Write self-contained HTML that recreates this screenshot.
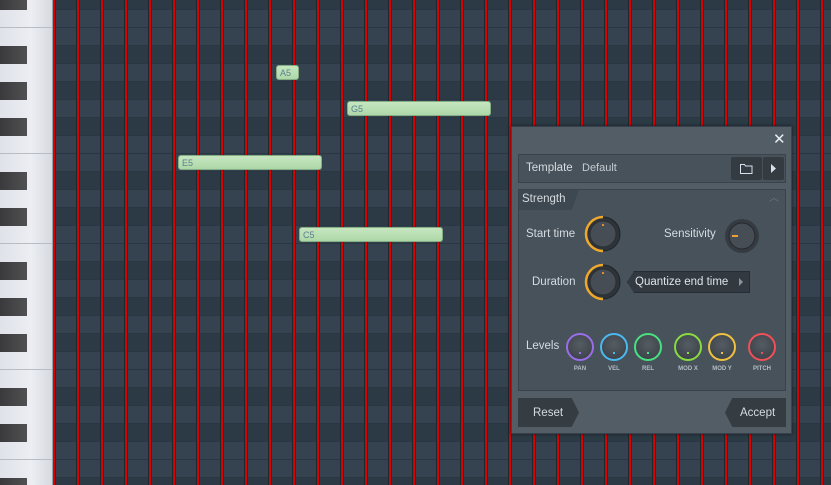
<!DOCTYPE html>
<html><head><style>
*{margin:0;padding:0;box-sizing:border-box}
html,body{width:831px;height:485px;overflow:hidden}
body{background:#2f3d48;font-family:"Liberation Sans",sans-serif;position:relative}
#piano{position:absolute;left:0;top:0;width:53px;height:485px;overflow:hidden;background:linear-gradient(90deg,#dfe2e8,#eceef3 60%,#d6d9e0);border-right:1px solid #9aa0a8}
.bk{position:absolute;left:0;width:27px;height:18px;background:linear-gradient(90deg,#3a3a3c,#505052)}
.wl{position:absolute;left:0;width:52px;height:1px;background:#b8bcc4}
#grid{position:absolute;left:53px;top:0;width:778px;height:485px;
background-image:
repeating-linear-gradient(90deg,#1e2830 0 1px,#d80000 1px 3px,#1e2830 3px 4px,transparent 4px 24px),
repeating-linear-gradient(180deg,transparent 0 17px,#2a3742 17px 18px),
linear-gradient(180deg,#34434f 0 36px,#2c3a45 36px 54px,#34434f 54px 72px,#2c3a45 72px 90px,#34434f 90px 108px,#2c3a45 108px 126px,#34434f 126px 162px,#2c3a45 162px 180px,#34434f 180px 198px,#2c3a45 198px 216px);
background-size:24px 100%,100% 18px,100% 216px;
background-position:-1px 0,0 10px,0 10px;background-repeat:repeat-x,repeat,repeat}
.note{position:absolute;height:15px;background:linear-gradient(#c6e6c0,#add8a8);border:1px solid #84ad84;border-radius:3px;font-size:9px;color:#5c8090;padding:2px 0 0 3px;line-height:10px}
#dlg{position:absolute;left:511px;top:126px;width:281px;height:308px;background:#525d66;border:1px solid #3a434b;box-shadow:0 0 3px #0008}
.t{position:absolute;color:#d6dce0;font-size:11.5px;line-height:14px}
.lk{position:absolute;width:28px;height:28px;border-radius:50%;background:radial-gradient(circle at 50% 40%,#555d64,#363c42);border:2px solid}
.lk i{position:absolute;left:11px;top:17px;width:2px;height:2px}
.lab{position:absolute;font-size:6px;font-weight:bold;color:#b5bcc2;width:40px;text-align:center}
</style></head><body>
<div id="piano">
<div class="bk" style="top:-8px"></div><div class="bk" style="top:46px"></div><div class="bk" style="top:82px"></div><div class="bk" style="top:118px"></div><div class="bk" style="top:172px"></div><div class="bk" style="top:208px"></div><div class="bk" style="top:262px"></div><div class="bk" style="top:298px"></div><div class="bk" style="top:334px"></div><div class="bk" style="top:388px"></div><div class="bk" style="top:424px"></div><div class="bk" style="top:478px;height:7px"></div>
<div class="wl" style="top:27px"></div><div class="wl" style="top:153px"></div><div class="wl" style="top:243px"></div><div class="wl" style="top:369px"></div><div class="wl" style="top:459px"></div>
</div>
<div id="grid"></div>
<div class="note" style="left:276px;top:65px;width:23px">A5</div>
<div class="note" style="left:347px;top:101px;width:144px">G5</div>
<div class="note" style="left:178px;top:155px;width:144px">E5</div>
<div class="note" style="left:299px;top:227px;width:144px">C5</div>

<div id="dlg">
<div class="t" style="left:261px;top:6px;font-size:15px;color:#e8eef2">✕</div>
<div style="position:absolute;left:6px;top:27px;width:268px;height:29px;background:#47525b;border:1px solid #3a434b"></div>
<div class="t" style="left:14px;top:34px">Template</div>
<div class="t" style="left:70px;top:34px;color:#c6ccd0;font-size:11px">Default</div>
<div style="position:absolute;left:219px;top:30px;width:31px;height:23px;background:#343b41;border-radius:2px"></div>
<svg style="position:absolute;left:228px;top:36px" width="13" height="11"><path d="M0.5 1.5h4l1 1.5h6.5v7.5h-11.5z" fill="none" stroke="#dde" stroke-width="1"/></svg>
<div style="position:absolute;left:251px;top:30px;width:21px;height:23px;background:#343b41;border-radius:2px"></div>
<svg style="position:absolute;left:259px;top:37px" width="6" height="9"><path d="M0 0L5 4.5L0 9z" fill="#dde"/></svg>
<div style="position:absolute;left:6px;top:62px;width:268px;height:202px;background:#47525b;border:1px solid #3a434b"></div>
<div style="position:absolute;left:7px;top:63px;width:60px;height:20px;background:#3e4850;clip-path:polygon(0 0,100% 0,88% 100%,0 100%)"></div>
<div class="t" style="left:10px;top:65px">Strength</div>
<div class="t" style="left:257px;top:65px;color:#6b757d;font-size:10px">︿</div>
<div class="t" style="left:14px;top:100px">Start time</div>
<div class="t" style="left:152px;top:100px">Sensitivity</div>
<div class="t" style="left:20px;top:148px">Duration</div>
<svg style="position:absolute;left:71px;top:87px" width="40" height="40"><circle cx="20" cy="20" r="17" fill="#2e3439" stroke="#1f2428"/><path d="M20 3A17 17 0 0 0 20 37" fill="none" stroke="#f0a82a" stroke-width="2.5"/><circle cx="20" cy="20" r="13" fill="#464d54" stroke="#2a2f34"/><rect x="19" y="10" width="2" height="2" fill="#e09030"/></svg>
<svg style="position:absolute;left:71px;top:135px" width="40" height="40"><circle cx="20" cy="20" r="17" fill="#2e3439" stroke="#1f2428"/><path d="M20 3A17 17 0 0 0 20 37" fill="none" stroke="#f0a82a" stroke-width="2.5"/><circle cx="20" cy="20" r="13" fill="#464d54" stroke="#2a2f34"/><rect x="19" y="10" width="2" height="2" fill="#e09030"/></svg>
<svg style="position:absolute;left:210px;top:89px" width="40" height="40"><circle cx="20" cy="20" r="17" fill="#353b41"/><circle cx="20" cy="20" r="13" fill="#464d54" stroke="#23282c"/><rect x="10" y="19" width="6" height="2" fill="#f0a030"/></svg>
<div style="position:absolute;left:115px;top:144px;width:123px;height:22px;background:#323940;border:1px solid #262c31;clip-path:polygon(7px 0,100% 0,100% 100%,7px 100%,0 50%)"></div>
<div class="t" style="left:123px;top:148px;color:#dfe4e8">Quantize end time</div>
<svg style="position:absolute;left:227px;top:151px" width="5" height="8"><path d="M0 0L4 4L0 8z" fill="#8a949c"/></svg>
<div class="t" style="left:14px;top:212px">Levels</div>
<div class="lk" style="left:54px;top:206px;border-color:#9a6ee8"><i style="background:#9a6ee8"></i></div>
<div class="lk" style="left:88px;top:206px;border-color:#4cb8f0"><i style="background:#4cb8f0"></i></div>
<div class="lk" style="left:122px;top:206px;border-color:#48e080"><i style="background:#48e080"></i></div>
<div class="lk" style="left:162px;top:206px;border-color:#88dc40"><i style="background:#88dc40"></i></div>
<div class="lk" style="left:196px;top:206px;border-color:#f0c040"><i style="background:#f0c040"></i></div>
<div class="lk" style="left:236px;top:206px;border-color:#f05058"><i style="background:#f05058"></i></div>
<div class="lab" style="left:48px;top:239px">PAN</div>
<div class="lab" style="left:82px;top:239px">VEL</div>
<div class="lab" style="left:116px;top:239px">REL</div>
<div class="lab" style="left:156px;top:239px">MOD X</div>
<div class="lab" style="left:190px;top:239px">MOD Y</div>
<div class="lab" style="left:230px;top:239px">PITCH</div>
<div style="position:absolute;left:6px;top:271px;width:61px;height:29px;background:#353c42;clip-path:polygon(0 0,88% 0,100% 50%,88% 100%,0 100%)"></div>
<div class="t" style="left:21px;top:279px">Reset</div>
<div style="position:absolute;left:213px;top:271px;width:61px;height:29px;background:#353c42;clip-path:polygon(12% 0,100% 0,100% 100%,12% 100%,0 50%)"></div>
<div class="t" style="left:228px;top:279px">Accept</div>
</div>
</body></html>
